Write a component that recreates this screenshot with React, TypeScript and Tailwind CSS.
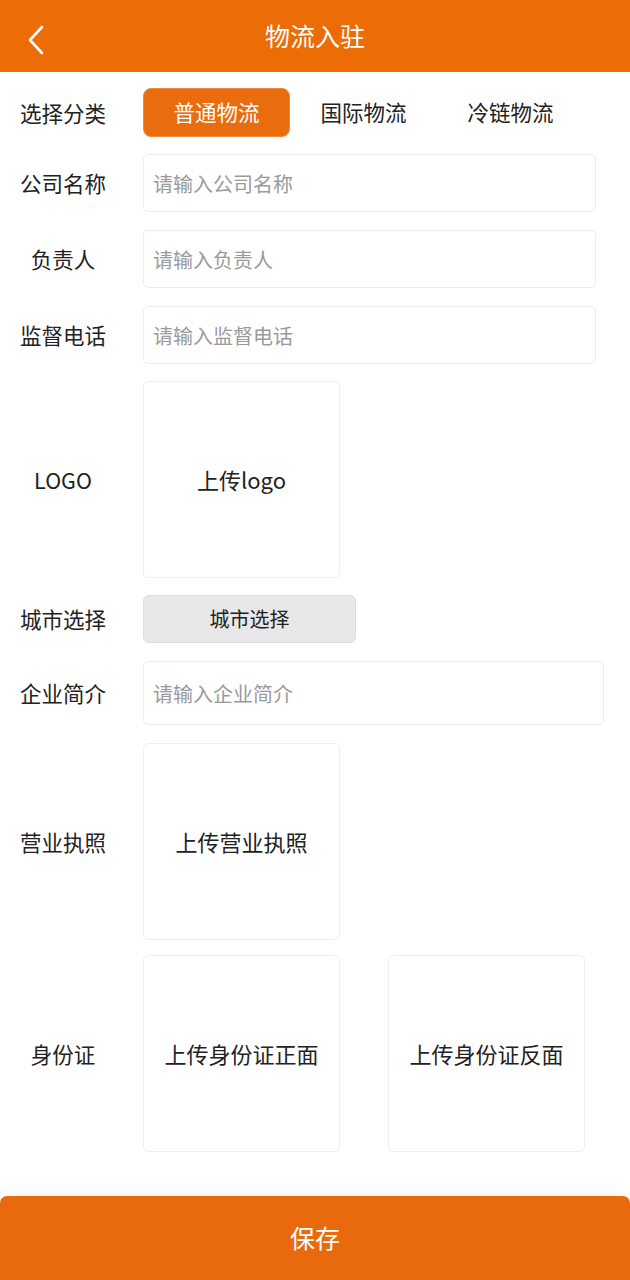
import React, { useState } from "react";

const font = { fontFamily: '"Noto Sans CJK SC", "Noto Sans", sans-serif' };

const categories = ["普通物流", "国际物流", "冷链物流"];

function Row({
  label,
  className = "",
  children,
}: {
  label: string;
  className?: string;
  children: React.ReactNode;
}) {
  return (
    <div className={`flex items-center pl-5 ${className}`}>
      <div className="w-[86px] shrink-0 text-center text-[21.5px] leading-none text-[#222]">{label}</div>
      <div className="ml-[37px] flex flex-1 items-center">{children}</div>
    </div>
  );
}

function TextInput({ placeholder, className = "" }: { placeholder: string; className?: string }) {
  return (
    <input
      type="text"
      placeholder={placeholder}
      className={`rounded-[5px] border border-[#ececec] bg-white px-[9px] text-[20px] text-[#333] outline-none placeholder:text-[#9a9a9a] ${className}`}
    />
  );
}

function UploadBox({ text }: { text: string }) {
  return (
    <div className="flex h-[197px] w-[197px] items-center justify-center rounded-[5px] border border-[#efefef] bg-white text-[22px] text-[#222]">
      {text}
    </div>
  );
}

export default function App() {
  const [active, setActive] = useState(0);

  return (
    <div style={font} className="flex min-h-[1280px] w-[630px] flex-col bg-white">
      {/* header */}
      <div className="relative flex h-[72px] items-center justify-center bg-[#ec6c05]">
        <button className="absolute left-[22px] top-[20px] p-1">
          <svg width="20" height="32" viewBox="0 0 20 32" fill="none">
            <path d="M16 3 L4 16 L16 29" stroke="#fff" strokeWidth="2.6" strokeLinecap="round" strokeLinejoin="round" />
          </svg>
        </button>
        <h1 className="text-[25px] font-normal text-white">物流入驻</h1>
      </div>

      {/* category */}
      <Row label="选择分类" className="mt-4 h-[49px]">
        {categories.map((c, i) => (
          <button
            key={c}
            onClick={() => setActive(i)}
            className={`h-[49px] w-[147px] rounded-[8px] text-[21.5px] ${
              i === active
                ? "border border-[#f08a3c] bg-[#e96c0e] text-white"
                : "text-[#222]"
            }`}
          >
            {c}
          </button>
        ))}
      </Row>

      <Row label="公司名称" className="mt-[17px]">
        <TextInput placeholder="请输入公司名称" className="h-[58px] w-[453px]" />
      </Row>
      <Row label="负责人" className="mt-[18px]">
        <TextInput placeholder="请输入负责人" className="h-[58px] w-[453px]" />
      </Row>
      <Row label="监督电话" className="mt-[18px]">
        <TextInput placeholder="请输入监督电话" className="h-[58px] w-[453px]" />
      </Row>

      <Row label="LOGO" className="mt-[17px]">
        <UploadBox text="上传logo" />
      </Row>

      <Row label="城市选择" className="mt-[17px]">
        <button className="h-[48px] w-[213px] rounded-[6px] border border-[#dcdcdc] bg-[#e8e8e8] text-[20px] text-[#222]">
          城市选择
        </button>
      </Row>

      <Row label="企业简介" className="mt-[18px]">
        <TextInput placeholder="请输入企业简介" className="h-[64px] w-[461px]" />
      </Row>

      <Row label="营业执照" className="mt-[18px]">
        <UploadBox text="上传营业执照" />
      </Row>

      <Row label="身份证" className="mt-[15px]">
        <div className="flex gap-[48px]">
          <UploadBox text="上传身份证正面" />
          <UploadBox text="上传身份证反面" />
        </div>
      </Row>

      {/* save */}
      <div className="mt-[44px] shadow-[0_-10px_14px_rgba(0,0,0,0.02)]">
        <button className="h-[84px] w-full rounded-t-[7px] bg-[#e86a0d] text-[25px] text-white">保存</button>
      </div>
    </div>
  );
}
